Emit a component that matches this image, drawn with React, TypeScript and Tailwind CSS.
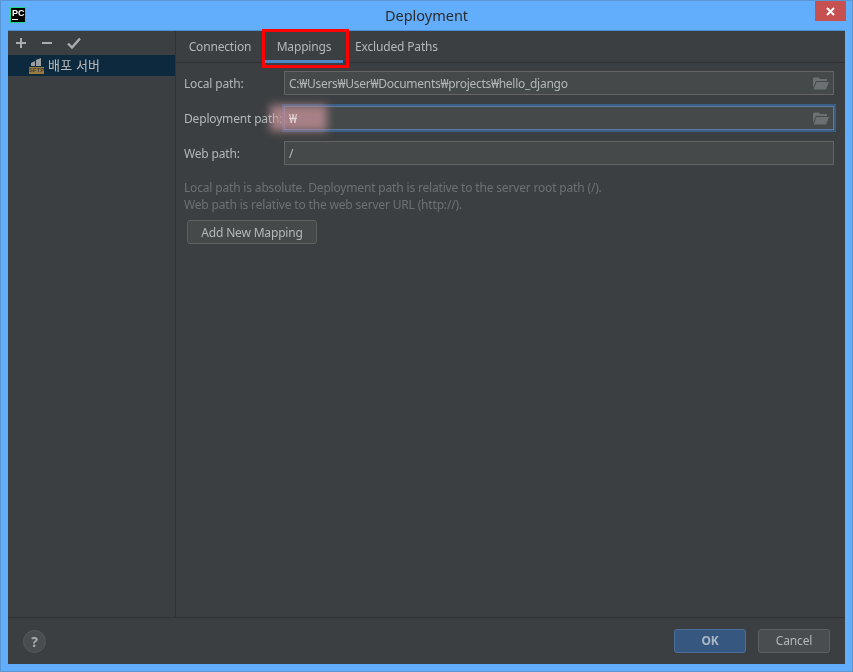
import React from "react";

const fontStack = "font-['Noto_Sans','Noto_Sans_CJK_KR',sans-serif] tracking-[-0.17px]";

function FolderIcon() {
  return (
    <svg width="16" height="13" viewBox="0 0 16 13" className="absolute right-[4px] top-[5px]">
      <path d="M0 1.5 L1 0.5 H6 L7 2 H14 V4 H3 L0 11 Z" fill="#6b7072" />
      <path d="M3.5 5 H16 L13 12.5 H0.5 Z" fill="#6b7072" />
    </svg>
  );
}

function SftpIcon() {
  return (
    <div className="relative w-[15px] h-[16px]">
      <svg width="15" height="9" viewBox="0 0 15 9" className="absolute left-0 top-0">
        <path d="M7 2 L12 0 V8 H7 Z M2 8 V5 L6 3 V8 Z" fill="#9a9fa1" />
      </svg>
      <div className="absolute left-0 bottom-0 w-[15px] h-[7px] bg-[#9c7a3c] text-[6px] leading-[7px] font-bold tracking-normal text-[#3c3f41] text-center font-['Liberation_Sans',sans-serif]">
        SFTP
      </div>
    </div>
  );
}

function PathRow({ label, value, focused, folder }: { label: string; value: string; focused?: boolean; folder?: boolean }) {
  return (
    <div className="flex items-center h-[24px]">
      <div className="w-[100px] shrink-0 text-[12px] text-[#b4b8ba] whitespace-nowrap pt-[1px]">{label}</div>
      <div
        className={
          focused
            ? "relative flex-1 h-[24px] bg-[#45494a] border border-[#5f7a9c] outline-2 outline-[#3a5d85] flex items-center px-[4px] pt-[1px] text-[12px] text-[#e6d8da]"
            : "relative flex-1 h-[24px] bg-[#45494a] border border-[#646464] flex items-center px-[4px] pt-[1px] text-[12px] tracking-[-0.28px] text-[#b4b8ba]"
        }
      >
        <span className="relative z-10">{value}</span>
        {folder && <FolderIcon />}
      </div>
    </div>
  );
}

export default function App() {
  return (
    <div className={`w-[853px] h-[672px] bg-[#63aefc] border border-[#5a96d2] flex flex-col overflow-hidden ${fontStack}`}>
      {/* title bar */}
      <div className="relative h-[29px] shrink-0 flex items-center justify-center text-[14.5px] tracking-normal text-[#2b2b2b]">
        <div className="absolute left-[9px] top-[6px] w-[16px] h-[16px] bg-black border border-[#21d789] text-white text-[9px] font-bold leading-[10px] pl-[1px] tracking-normal font-['Liberation_Sans',sans-serif]">
          PC
          <div className="w-[6px] h-px bg-white mt-px" />
        </div>
        <span>Deployment</span>
        <div className="absolute right-[6px] top-0 w-[31px] h-[20px] bg-[#c75050] flex items-center justify-center">
          <svg width="9" height="9" viewBox="0 0 9 9">
            <path d="M1 1 L8 8 M8 1 L1 8" stroke="white" strokeWidth="2" />
          </svg>
        </div>
      </div>

      {/* client area */}
      <div className="mx-[7px] flex-1 min-h-0 bg-[#3c3f41] flex flex-col text-[#b4b8ba] border-t border-[#4f8fd0]">
        <div className="flex flex-1 min-h-0">
          {/* sidebar */}
          <div className="w-[168px] shrink-0 border-r border-[#323232] flex flex-col">
            <div className="h-[24px] flex items-center pl-[7px] gap-[13px]">
              <svg width="12" height="12" viewBox="0 0 12 12">
                <path d="M6 1 V11 M1 6 H11" stroke="#a9adb0" strokeWidth="2" />
              </svg>
              <svg width="14" height="12" viewBox="0 0 14 12">
                <path d="M2 6 H12" stroke="#a9adb0" strokeWidth="2" />
              </svg>
              <svg width="14" height="12" viewBox="0 0 14 12">
                <path d="M1 6.5 L5 10.5 L13 1.5" stroke="#a9adb0" strokeWidth="2.4" fill="none" />
              </svg>
            </div>
            <div className="h-[21px] bg-[#0d293e] flex items-center pl-[21px] gap-[4px] text-[13px] tracking-[0.2px] text-[#bbbbbb]">
              <SftpIcon />
              <span>배포 서버</span>
            </div>
          </div>

          {/* main panel */}
          <div className="flex-1 min-w-0 flex flex-col">
            <div className="h-[32px] shrink-0 border-b border-[#323232] flex text-[12px] pl-[1px]">
              <div className="w-[88px] flex items-center justify-center pr-[2px]">Connection</div>
              <div className="relative w-[78px] flex items-center justify-center">
                Mappings
                <div className="absolute left-0 right-0 bottom-[-1px] h-[3px] bg-[#4a88c7]" />
                <div className="absolute -left-[3px] -right-[6px] -top-[2px] -bottom-[6px] border-[3px] border-[#ff0000]" />
              </div>
              <div className="w-[107px] flex items-center justify-center">Excluded Paths</div>
            </div>

            <div className="relative flex-1 pl-[8px] pr-[11px] pt-[8px] flex flex-col gap-[11px]">
              <PathRow label="Local path:" value="C:₩Users₩User₩Documents₩projects₩hello_django" folder />
              <PathRow label="Deployment path:" value="₩" focused folder />
              <PathRow label="Web path:" value="/" />
              <div className="text-[12px] leading-[17px] text-[#6e7173] mt-[3px]">
                <div>Local path is absolute. Deployment path is relative to the server root path (/).</div>
                <div>Web path is relative to the web server URL (http://).</div>
              </div>
              <div className="pl-[3px] -mt-[5px]">
                <button className="w-[130px] h-[24px] bg-[#45494a] border border-[#5e6060] rounded-[3px] pt-[2px] text-[12px] text-[#b4b8ba]">
                  Add New Mapping
                </button>
              </div>
              {/* blurred patch over the deployment path */}
              <div className="absolute left-[94px] top-[42px] w-[57px] h-[26px] bg-[#b88a90] opacity-85 blur-[4px] mix-blend-lighten" />
            </div>
          </div>
        </div>

        {/* footer */}
        <div className="h-[47px] shrink-0 border-t border-[#323232] flex items-center justify-between pl-[15px] pr-[15px]">
          <div className="w-[23px] h-[23px] rounded-full bg-[#4a4d4f] border border-[#56595b] flex items-center justify-center text-[14px] font-bold text-[#a9adb0]">
            ?
          </div>
          <div className="flex gap-[12px] text-[12px]">
            <button className="w-[72px] h-[24px] bg-[#365880] border border-[#4c6f99] rounded-[3px] font-bold text-[#a9b7c6]">
              OK
            </button>
            <button className="w-[72px] h-[24px] bg-[#4a4d4f] border border-[#5e6060] rounded-[3px] text-[#b4b8ba]">
              Cancel
            </button>
          </div>
        </div>
      </div>
      <div className="h-[7px] shrink-0" />
    </div>
  );
}
